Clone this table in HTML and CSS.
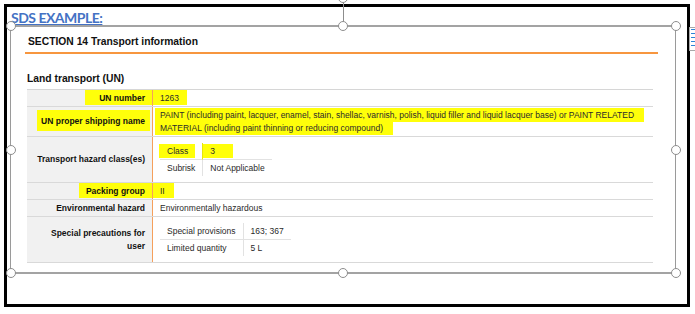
FILE: index.html
```html
<!DOCTYPE html>
<html>
<head>
<meta charset="utf-8">
<link rel="stylesheet" href="styles.css">
</head>
<body>
<div class="frame">
  <div class="title">SDS EXAMPLE:</div>
  <div class="sheet">
    <div class="doc">
      <h2 class="sec">SECTION 14 Transport information</h2>
      <h3 class="sub">Land transport (UN)</h3>
      <div class="tbl">
        <div class="row">
          <div class="lbl"><div class="t"><span class="hl hl-un">UN number</span></div></div>
          <div class="val"><span class="hl hl-num">1263</span></div>
        </div>
        <div class="row">
          <div class="lbl"><div class="t"><span class="hl hl-psn">UN proper shipping name</span></div></div>
          <div class="val"><span class="hl hl-paint">PAINT (including paint, lacquer, enamel, stain, shellac, varnish, polish, liquid filler and liquid lacquer base) or PAINT RELATED MATERIAL (including paint thinning or reducing compound)</span></div>
        </div>
        <div class="row">
          <div class="lbl"><div class="t">Transport hazard class(es)</div></div>
          <div class="val nest">
            <div class="mini">
              <div class="c hl-cell"><span class="hl hl-cls">Class</span></div>
              <div class="c"><span class="hl hl-three">3</span></div>
              <div class="c">Subrisk</div>
              <div class="c">Not Applicable</div>
            </div>
          </div>
        </div>
        <div class="row">
          <div class="lbl"><div class="t"><span class="hl hl-pg">Packing group</span></div></div>
          <div class="val"><span class="hl hl-ii">II</span></div>
        </div>
        <div class="row">
          <div class="lbl"><div class="t">Environmental hazard</div></div>
          <div class="val">Environmentally hazardous</div>
        </div>
        <div class="row">
          <div class="lbl"><div class="t">Special precautions for user</div></div>
          <div class="val nest">
            <div class="mini">
              <div class="c">Special provisions</div>
              <div class="c">163; 367</div>
              <div class="c">Limited quantity</div>
              <div class="c">5 L</div>
            </div>
          </div>
        </div>
      </div>
    </div>
    <div class="rot-line"></div>
    <div class="h rot"></div>
    <div class="h tl"></div>
    <div class="h tm"></div>
    <div class="h tr"></div>
    <div class="h ml"></div>
    <div class="h mr"></div>
    <div class="h bl"></div>
    <div class="h bm"></div>
    <div class="h br"></div>
    <div class="layout-opt">
      <svg width="24" height="24" viewBox="0 0 24 24">
        <rect x="0.5" y="0.5" width="23" height="23" fill="#fff" stroke="#a8a8a8"/>
        <g stroke="#2e83d6" stroke-width="1">
          <line x1="2" y1="2.5" x2="22" y2="2.5"/>
          <line x1="2" y1="6.5" x2="22" y2="6.5"/>
          <line x1="2" y1="10.5" x2="22" y2="10.5"/>
          <line x1="2" y1="14.5" x2="22" y2="14.5"/>
          <line x1="2" y1="18.5" x2="22" y2="18.5"/>
        </g>
      </svg>
    </div>
  </div>
</div>
</body>
</html>
```
FILE: styles.css
```css
* { box-sizing: border-box; }
html, body { margin: 0; padding: 0; overflow: hidden; background: #fff; }
body {
  width: 695px;
  height: 314px;
  font-family: "Liberation Sans", Arial, sans-serif;
}

.frame {
  margin: 4px 0 0 4px;
  width: 686px;
  height: 303px;
  border: 3px solid #000;
  padding-left: 3px;
}

.title {
  font-family: Lato, "Liberation Sans", sans-serif;
  font-size: 14px;
  font-weight: bold;
  letter-spacing: -0.5px;
  line-height: 16px;
  height: 18px;
  padding: 3px 0 0 1px;
  color: #4472c4;
  text-decoration: underline;
  text-decoration-thickness: 1px;
  text-underline-offset: 1px;
  white-space: nowrap;
}

.sheet {
  position: relative;
  width: 666px;
  height: 249px;
  border-top: 2px solid #a3a3a3;
  border-bottom: 2px solid #a3a3a3;
  border-left: 1px solid #9a9a9a;
  border-right: 1px solid #9a9a9a;
}

.doc {
  padding: 8px 17px 0 14px;
}

.sec {
  margin: 0;
  font-size: 10.3px;
  font-weight: bold;
  line-height: 14px;
  padding: 0 0 3px 3px;
  border-bottom: 2px solid #f7963f;
  color: #111;
}

.sub {
  margin: 18px 0 3px 2px;
  font-size: 10.3px;
  font-weight: bold;
  line-height: 14px;
  color: #111;
}

.tbl {
  margin: 0 5px 0 2px;
  border-top: 1px solid #d6d6d6;
}

.row {
  display: grid;
  grid-template-columns: 126px 1fr;
  border-bottom: 1px solid #d9d9d9;
}

.lbl {
  background: #f1f1f1;
  border-right: 1px solid #f5a05c;
  padding: 1.5px 7px;
  font-size: 8.5px;
  font-weight: bold;
  line-height: 13px;
  color: #111;
  text-align: right;
  display: flex;
  align-items: center;
  justify-content: flex-end;
}

.val {
  padding: 1.5px 7px;
  font-size: 8.5px;
  line-height: 13px;
  color: #2a2a2a;
}

.val.nest { padding: 6px 7px; }

.mini {
  display: inline-grid;
  grid-template-columns: auto auto;
}

.mini .c {
  padding: 1.5px 7px;
  line-height: 13px;
}

.mini .c:nth-child(odd) { border-right: 1px solid #e2e2e2; }
.mini .c:nth-child(-n+2) { border-bottom: 1px solid #e2e2e2; }
.mini .c.hl-cell { border-right-color: #e6e60a; }

.hl {
  background: #ffff0a;
  -webkit-box-decoration-break: clone;
  box-decoration-break: clone;
}

.hl-un { padding: 3px 7px 2px 14px; margin-right: -7px; }
.hl-num { padding: 3px 8px 2px 7px; margin-left: -7px; }
.hl-psn { padding: 6px 5px 5px 4px; margin-right: -5px; }
.hl-paint { padding: 2px 10px 2px 5px; margin-left: -5px; }
.hl-cls { padding: 2px 7px 2px 8px; margin: 0 -7px 0 -8px; }
.hl-three { padding: 2px 18px 2px 7px; margin-left: -7px; }
.hl-pg { padding: 2.5px 7px 2.5px 7px; margin-right: -7px; }
.hl-ii { padding: 2.5px 9px 2.5px 7px; margin-left: -7px; }

.h {
  position: absolute;
  width: 10px;
  height: 10px;
  border: 1.5px solid #8d8d8d;
  border-radius: 50%;
  background: #fff;
}

.tl { left: -5.5px; top: -6px; }
.tm { left: 50%; margin-left: -5px; top: -6px; }
.tr { right: -5.5px; top: -6px; }
.ml { left: -5.5px; top: 50%; margin-top: -5px; }
.mr { right: -5.5px; top: 50%; margin-top: -5px; }
.bl { left: -5.5px; bottom: -6px; }
.bm { left: 50%; margin-left: -5px; bottom: -6px; }
.br { right: -5.5px; bottom: -6px; }

.rot-line {
  position: absolute;
  left: 50%;
  top: -26px;
  width: 1px;
  height: 21px;
  background: #8d8d8d;
}

.rot { left: 50%; margin-left: -5px; top: -34px; }

.layout-opt {
  position: absolute;
  left: calc(100% + 14px);
  top: 0;
  width: 24px;
  height: 24px;
}

.layout-opt svg { display: block; }
```
